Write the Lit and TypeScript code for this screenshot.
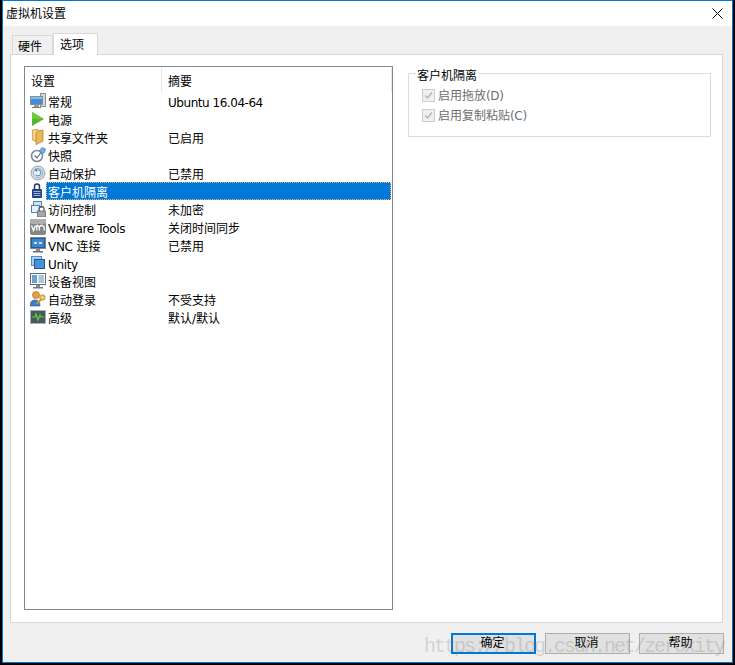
import { LitElement, html, css, svg } from "lit";
import { customElement } from "lit/decorators.js";

const icons: Record<string, unknown> = {
  monitor: svg`<rect x="10" y="0" width="6" height="14" fill="#8f8f8f"/><rect x="11" y="1" width="4" height="12" fill="#d6d6d6"/><rect x="0" y="3" width="13" height="9" fill="#8a8f96"/><rect x="1" y="4" width="11" height="7" fill="#3f8fd6"/><rect x="1" y="4" width="11" height="2" fill="#86bdea"/><rect x="4" y="12" width="5" height="2" fill="#9a9a9a"/><rect x="2" y="14" width="9" height="1" fill="#777"/>`,
  play: svg`<path d="M2 1 L14 8 L2 15 Z" fill="#5cb531"/><path d="M2 1 L14 8 L2 8 Z" fill="#6fc93f"/>`,
  folder: svg`<path d="M2.4 1 L8 .4 L8 13 L2.4 11 Z" fill="#f6d487" stroke="#b88a2e" stroke-width=".7"/><path d="M8 2 L13 1 L13 12 L6 15.6 L6 4 Z" fill="#edb654" stroke="#a97c24" stroke-width=".7"/>`,
  snapshot: svg`<circle cx="7" cy="9" r="5.5" fill="#fff" stroke="#7d8a97" stroke-width="1.6"/><path d="M4.5 8.5L7 11L10.5 6" fill="none" stroke="#3b6ea5" stroke-width="1.1"/><path d="M9.5 3.5 L12 .5 L15.5 2 L14.5 5.5 L12 6.5 Z" fill="#6fb1e6" stroke="#2f6ea6" stroke-width=".6"/>`,
  restore: svg`<circle cx="8" cy="8" r="7" fill="#dedede" stroke="#a0a0a0"/><circle cx="8" cy="8" r="4.7" fill="#eef3f8" stroke="#8ab0d6" stroke-width="1"/><path d="M5.5 9.5A3 3 0 1 0 6 5.5" fill="none" stroke="#5b93c8" stroke-width="1.2"/><path d="M4 5 L7 3.5 L7 7 Z" fill="#4b86c0"/>`,
  lock: svg`<path d="M4.5 6V3.5a2.5 2.5 0 0 1 5 0V6" fill="none" stroke="#22386a" stroke-width="1.5"/><rect x="2" y="6" width="10" height="9" rx="1" fill="#243f82"/><rect x="3.5" y="8" width="7" height="1" fill="#9db4e2"/><rect x="3.5" y="10" width="7" height="1" fill="#9db4e2"/><rect x="3.5" y="12" width="7" height="1" fill="#9db4e2"/>`,
  access: svg`<rect x="3.5" y=".5" width="8" height="6" fill="#cfe3f7" stroke="#4a86c5"/><rect x="1.5" y="4.5" width="8" height="7" fill="#e6f1fb" stroke="#4a86c5"/><path d="M9 10V8a2.5 2.5 0 0 1 5 0v2" fill="none" stroke="#666" stroke-width="1.3"/><rect x="7.5" y="10" width="8" height="6" fill="#a6a6a6" stroke="#5c5c5c" stroke-width=".7"/>`,
  vm: svg`<rect width="16" height="16" rx="2" fill="#858585"/><rect width="16" height="5" rx="2" fill="#adadad"/><path d="M1.5 6.5L3.5 11.5L5.5 6.5M6.8 11.5V6.5H7.8L9.4 8V11.5M9.4 8L11 6.5H12.4L14.2 8V11.5" fill="none" stroke="#fff" stroke-width="1.3"/>`,
  vnc: svg`<rect x=".5" y=".5" width="15" height="11" fill="#1f5f9e" stroke="#7b8794"/><rect x="2" y="2" width="12" height="8" fill="#3e86cc"/><path d="M4 6H7M9 6H12" stroke="#fff" stroke-width="1.4"/><rect x="6" y="12" width="4" height="2" fill="#8a8a8a"/><rect x="3" y="14" width="10" height="1.5" fill="#6d6d6d"/>`,
  unity: svg`<rect x="1.5" y="1.5" width="10" height="9" fill="#a9cdef" stroke="#4a90d0"/><rect x="4.5" y="4.5" width="10" height="9" fill="#4a90d9" stroke="#1c5a9a"/>`,
  device: svg`<rect x=".5" y=".5" width="15" height="11" fill="#fff" stroke="#5c6d7e"/><rect x="2" y="2" width="5" height="8" fill="#6d9fd0"/><path d="M8.5 3H14M8.5 5H14M8.5 7H14M8.5 9H14" stroke="#5c87b5"/><rect x="6" y="12" width="4" height="2" fill="#8a8a8a"/><rect x="3" y="14" width="10" height="1.5" fill="#777"/>`,
  login: svg`<circle cx="6" cy="4" r="3.5" fill="#e7a04a" stroke="#9a6020" stroke-width=".6"/><path d="M0 15c0-4 2-6 5-6s5 2 5 6Z" fill="#3f7fc4" stroke="#22508a" stroke-width=".6"/><circle cx="12.5" cy="6.5" r="2.7" fill="#f4cd62" stroke="#a47f22" stroke-width=".8"/><path d="M11 8.5L6.5 13" stroke="#c49a2e" stroke-width="1.8"/>`,
  advanced: svg`<rect x=".5" y="1.5" width="15" height="13" fill="#47595a" stroke="#a8b0b8"/><path d="M2 8H5L6 5L8 11L10 6L11 8H14" fill="none" stroke="#58d048" stroke-width="1.2"/>`,
};

const lat = (t: string, tight = false) => html`<span class="lat ${tight ? "tight" : ""}">${t}</span>`;

const rows: [string, unknown, unknown][] = [
  ["monitor", "常规", lat("Ubuntu 16.04-64", true)],
  ["play", "电源", ""],
  ["folder", "共享文件夹", "已启用"],
  ["snapshot", "快照", ""],
  ["restore", "自动保护", "已禁用"],
  ["lock", "客户机隔离", ""],
  ["access", "访问控制", "未加密"],
  ["vm", lat("VMware Tools"), "关闭时间同步"],
  ["vnc", html`${lat("VNC")} 连接`, "已禁用"],
  ["unity", lat("Unity"), ""],
  ["device", "设备视图", ""],
  ["login", "自动登录", "不受支持"],
  ["advanced", "高级", "默认/默认"],
];

@customElement("app-root")
export class AppRoot extends LitElement {
  static styles = css`
    :host {
      display: block;
      width: 735px;
      height: 665px;
      font: 12px/16px "DejaVu Sans", "Noto Sans CJK SC", sans-serif;
      color: #000;
      position: relative;
      overflow: hidden;
      background: #000;
      padding-left: 2px;
      box-sizing: border-box;
    }
    .lat { letter-spacing: -0.33px; }
    .lat.tight { letter-spacing: -0.46px; }
    .win {
      box-sizing: border-box;
      height: 663px;
      width: 731px;
      border: 1px solid #0078d7;
      display: flex;
      flex-direction: column;
      background: #f0f0f0;
    }
    .title {
      height: 25px;
      flex: none;
      background: #fff;
      display: flex;
      align-items: center;
      justify-content: space-between;
      padding: 0 9px 0 3px;
    }
    .title svg { display: block; }
    .tabs {
      height: 28px;
      flex: none;
      display: flex;
      align-items: flex-end;
      padding-left: 9px;
    }
    .tab {
      box-sizing: border-box;
      border: 1px solid #d9d9d9;
      border-bottom: none;
      line-height: 22px;
    }
    .tab.a { width: 41px; height: 19px; padding-left: 5px; background: #f0f0f0; }
    .tab.b { width: 45px; height: 22px; padding-left: 6px; background: #fff; margin-bottom: -1px; position: relative; z-index: 1; }
    .panel {
      box-sizing: border-box;
      height: 569px;
      margin: 0 9px 0 7px;
      background: #fff;
      border: 1px solid #d9d9d9;
      padding: 11px 11px 12px 13px;
      display: flex;
      gap: 15px;
      flex: none;
    }
    .list {
      box-sizing: border-box;
      width: 369px;
      flex: none;
      border: 1px solid #828790;
      background: #fff;
    }
    .head {
      height: 25px;
      display: grid;
      grid-template-columns: 137px 230px;
    }
    .head .c { padding: 6px 0 0 6px; margin-top: 1px; border-right: 1px solid #e3e5e8; }
    .row {
      height: 18px;
      display: grid;
      grid-template-columns: 16px 122px 1fr;
      padding-left: 5px;
      align-items: center;
      white-space: nowrap;
    }
    .row svg { display: block; }
    .name, .sum { line-height: 22px; height: 18px; align-self: start; }
    .name { padding-left: 2px; }
    .bar {
      grid-column: 2 / 4;
      display: grid;
      grid-template-columns: 122px 1fr;
      height: 18px;
      margin-right: 1px;
      background: #0078d7;
      color: #fff;
      box-sizing: border-box;
      outline: 1px dotted #e8b67a;
      outline-offset: -1px;
    }
    .group {
      position: relative;
      box-sizing: border-box;
      margin-top: 7px;
      width: 303px;
      height: 64px;
      border: 1px solid #dcdcdc;
      padding: 11px 0 0 13px;
    }
    .legend {
      position: absolute;
      top: -6px;
      left: 7px;
      padding: 0 2px 0 1px;
      background: #fff;
    }
    .chk {
      display: flex;
      align-items: center;
      gap: 3px;
      height: 20px;
      color: #6d6d6d;
    }
    .chk span.t { padding-top: 2px; }
    .chk i {
      box-sizing: border-box;
      width: 13px;
      height: 13px;
      border: 1px solid #cccccc;
      background: #f0f0f0;
      display: block;
    }
    .chk svg { display: block; }
    .foot {
      flex: 1;
      display: flex;
      justify-content: flex-end;
      gap: 9px;
      padding: 10px 8px 0 0;
    }
    .btn {
      box-sizing: border-box;
      width: 85px;
      height: 21px;
      line-height: 19px;
      padding-right: 2px;
      text-align: center;
      background: #e1e1e1;
      border: 1px solid #adadad;
    }
    .btn.def {
      border: 2px solid #0078d7;
      line-height: 17px;
    }
    .mark {
      position: absolute;
      left: 424px;
      top: 634px;
      font: 20px/26px "Liberation Mono", monospace;
      letter-spacing: -2px;
      color: rgba(120,120,120,.27);
      white-space: nowrap;
      pointer-events: none;
    }
  `;

  render() {
    return html`
      <div class="win">
        <div class="title">
          <span>虚拟机设置</span>
          <svg width="11" height="11" viewBox="0 0 11 11"><path d="M.5.5l10 10M10.5.5l-10 10" stroke="#000" fill="none"/></svg>
        </div>
        <div class="tabs">
          <div class="tab a">硬件</div>
          <div class="tab b">选项</div>
        </div>
        <div class="panel">
          <div class="list">
            <div class="head"><div class="c">设置</div><div class="c">摘要</div></div>
            ${rows.map(([ic, n, s], i) => html`
              <div class="row">
                <svg width="16" height="16" viewBox="0 0 16 16">${icons[ic]}</svg>
                ${i === 5
                  ? html`<div class="bar"><span class="name">${n}</span><span class="sum">${s}</span></div>`
                  : html`<span class="name">${n}</span><span class="sum">${s}</span>`}
              </div>`)}
          </div>
          <div class="group">
            <div class="legend">客户机隔离</div>
            ${[["启用拖放", "(D)"], ["启用复制粘贴", "(C)"]].map(([t, k]) => html`
              <div class="chk"><i><svg width="11" height="11" viewBox="0 0 11 11"><path d="M2 5.5L4.5 8L9 2.5" fill="none" stroke="#b4b4b4" stroke-width="1.4"/></svg></i><span class="t">${t}${lat(k)}</span></div>`)}
          </div>
        </div>
        <div class="foot">
          <div class="btn def">确定</div>
          <div class="btn">取消</div>
          <div class="btn">帮助</div>
        </div>
      </div>
      <div class="mark">https://blog.csdn.net/zeroxity</div>
    `;
  }
}
